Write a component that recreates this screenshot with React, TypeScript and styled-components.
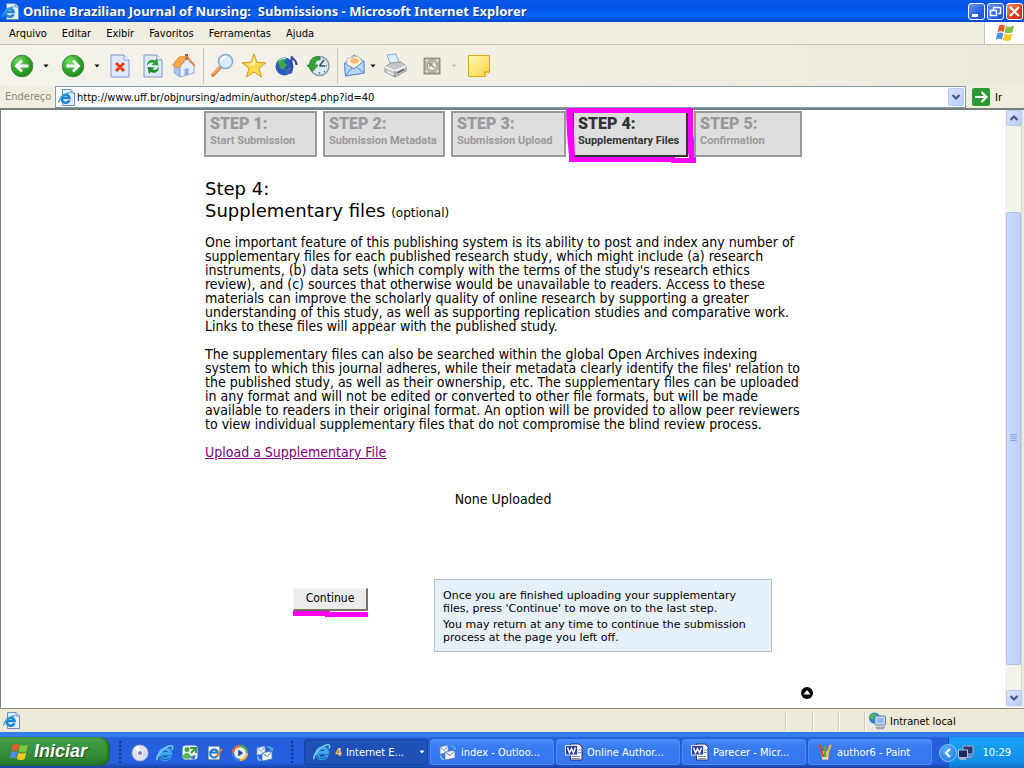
import React from "react";
import styled, { createGlobalStyle } from "styled-components";

const ui = '"DejaVu Sans Condensed", "DejaVu Sans", sans-serif';
const text = '"DejaVu Sans", sans-serif';

const Global = createGlobalStyle`
  * { box-sizing: border-box; }
  body { margin: 0; background: #fff; font-family: ${ui}; font-size: 11px; color: #000; }
  button, input { font: inherit; color: inherit; }
  h1, p { margin: 0; font-weight: normal; }
`;

const Window = styled.div`
  display: flex;
  flex-direction: column;
  min-height: 100vh;
`;

/* ---------- title bar ---------- */
const TitleBar = styled.header`
  display: flex;
  align-items: center;
  height: 22px;
  padding: 0 1px 0 2px;
  gap: 4px;
  background: linear-gradient(#0a5ae8 0, #0355e6 30%, #0562fa 75%, #0448cc 100%);
`;
const Title = styled.span`
  flex: 1;
  font: bold 13px "Noto Sans", sans-serif;
  color: #fff;
  text-shadow: 1px 1px 0 #0f3a9a;
  white-space: pre;
  overflow: hidden;
`;
const WindowButtons = styled.div`
  display: flex;
  gap: 2px;
`;
const WindowButton = styled.button<{ $close?: boolean }>`
  width: 17px;
  height: 17px;
  padding: 0;
  border: 1px solid #fff;
  border-radius: 3px;
  display: flex;
  align-items: center;
  justify-content: center;
  background: ${(p) =>
    p.$close ? "linear-gradient(135deg, #f09070, #d8401c 60%, #c03010)" : "linear-gradient(135deg, #6a9af8, #2a62e4 60%, #1c50d0)"};
`;

/* ---------- menu, tool and address bars ---------- */
const MenuBar = styled.nav`
  display: flex;
  align-items: stretch;
  height: 23px;
  padding-left: 9px;
  background: #efeddf;
  border-bottom: 1px solid #c8c5b4;
`;
const Menus = styled.div`
  flex: 1;
  display: flex;
  align-items: center;
  gap: 15px;
`;
const PlainButton = styled.button`
  border: 0;
  padding: 0;
  background: none;
`;
const Throbber = styled.div`
  width: 40px;
  display: flex;
  align-items: center;
  justify-content: center;
  background: #fff;
  border-left: 1px solid #c8c5b4;
`;
const ToolBar = styled.div`
  display: flex;
  align-items: center;
  height: 41px;
  padding-left: 6px;
  background: linear-gradient(90deg, #f4f3ec, #ece9d8);
`;
const Tool = styled.button<{ $w: number }>`
  width: ${(p) => p.$w}px;
  height: 32px;
  padding: 0;
  border: 0;
  background: none;
  display: flex;
  align-items: center;
  justify-content: center;
`;
const ToolRule = styled.span`
  width: 1px;
  height: 36px;
  margin: 0 2px 0 3px;
  background: #c8c5b4;
`;
const AddressBar = styled.form`
  display: flex;
  align-items: stretch;
  height: 22px;
  background: #efeddf;
`;
const AddressLabel = styled.label`
  width: 55px;
  padding-left: 5px;
  line-height: 22px;
  color: #8a8878;
`;
const AddressField = styled.div`
  flex: 1;
  display: flex;
  align-items: center;
  gap: 2px;
  padding: 0 1px 0 2px;
  background: #fff;
  border: 1px solid #7f9db9;
`;
const AddressInput = styled.input`
  flex: 1;
  min-width: 0;
  border: 0;
  padding: 0;
  outline: 0;
  background: none;
`;
const BlueButton = styled.button<{ $h: number }>`
  width: 16px;
  height: ${(p) => p.$h}px;
  flex: none;
  padding: 0;
  border: 1px solid #b4c8f6;
  border-radius: 2px;
  background: linear-gradient(135deg, #dae5fe, #b6ccfa);
  display: flex;
  align-items: center;
  justify-content: center;
`;
const GoButton = styled.button`
  width: 58px;
  padding: 0 0 0 6px;
  border: 0;
  background: none;
  display: flex;
  align-items: center;
  gap: 5px;
`;

/* ---------- page ---------- */
const Viewport = styled.div`
  flex: 1;
  display: flex;
  border: solid #75807a;
  border-width: 2px 0 0 1px;
  border-bottom: 1px solid #fff;
`;
const Page = styled.main`
  flex: 1;
  min-width: 0;
  padding: 1px 0 8px;
  font: 14px/14px ${ui};
`;
const Column = styled.div`
  width: 598px;
  max-width: 100%;
  margin: 0 auto;
`;
const Steps = styled.ol`
  display: flex;
  gap: 6px;
  margin: 0 0 21px;
  padding: 0;
  list-style: none;
`;
const Step = styled.li<{ $w: number; $active?: boolean }>`
  position: relative;
  width: ${(p) => p.$w}px;
  height: 46px;
  padding: 3px 0 0 4px;
  border: 2px solid ${(p) => (p.$active ? "#333" : "#999")};
  background: #dedede;
  color: ${(p) => (p.$active ? "#333" : "#999")};
  font-family: Roboto, sans-serif;
  font-weight: bold;
  white-space: nowrap;
`;
const StepNumber = styled.div`
  font-size: 16px;
  font-weight: 900;
  line-height: 16px;
`;
const StepName = styled.div`
  font-size: 11px;
  line-height: 18px;
`;
const Scribble = styled.svg`
  position: absolute;
  left: -9px;
  top: -7px;
`;
const Heading = styled.h1`
  font-family: ${text};
  font-size: 18px;
  line-height: 22px;
  margin-bottom: 11px;
  padding-left: 1px;
`;
const Small = styled.span`
  font-size: 12px;
`;
const Paragraph = styled.p`
  margin-bottom: 14px;
  padding-left: 1px;
  white-space: nowrap;
`;
const UploadLink = styled.a`
  color: #800080;
`;
const Empty = styled.p`
  margin: 33px 0 73px;
  text-align: center;
`;
const Actions = styled.div`
  display: flex;
  align-items: flex-start;
`;
const ActionCell = styled.div`
  width: 230px;
  padding: 9px 66px 0 0;
  display: flex;
  flex-direction: column;
  align-items: flex-end;
`;
const ContinueButton = styled.button`
  width: 75px;
  height: 23px;
  padding: 0 0 2px;
  border: 1px solid;
  border-color: #f4f4f0 #77735c #77735c #f4f4f0;
  border-right-width: 2px;
  border-bottom-width: 2px;
  background: #ececec;
  font: 12px ${ui};
`;
const Note = styled.aside`
  width: 338px;
  padding: 9px 8px 7px;
  border: 1px solid #b8c0c8;
  background: #e6f0fa;
  font: 11px/13px ${text};
  white-space: nowrap;

  p + p { margin-top: 3px; }
`;
const TopLink = styled.a`
  display: flex;
  justify-content: flex-end;
  width: 620px;
  max-width: 100%;
  margin: 35px auto 0;
`;

const ScrollBar = styled.div`
  width: 19px;
  flex: none;
  display: flex;
  flex-direction: column;
  padding: 0 0 1px 1px;
  background: linear-gradient(90deg, #f3f2ea 0 16px, #d8d6cc 16px 17px, #ece9d8 17px);
`;
const Track = styled.div<{ $grow: number }>`
  flex: ${(p) => p.$grow} 0 0;
`;
const Thumb = styled.div`
  flex: 453 0 0;
  width: 15px;
  border: 1px solid #a8bff0;
  border-radius: 2px;
  background: linear-gradient(90deg, #cbdafe, #bdd0fb);
  display: flex;
  align-items: center;
  justify-content: center;
`;

/* ---------- status bar ---------- */
const StatusBar = styled.footer`
  display: flex;
  align-items: stretch;
  height: 24px;
  padding: 3px 0 2px 3px;
  border-top: 1px solid #8c8a7c;
  background: #ece9d8;
`;
const StatusText = styled.div`
  flex: 1;
`;
const StatusPane = styled.div<{ $w: number }>`
  width: ${(p) => p.$w}px;
  display: flex;
  align-items: center;
  gap: 3px;
  padding-left: 3px;
  border-left: 1px solid #cbc8b6;
  box-shadow: inset 1px 0 0 #fff;
`;

/* ---------- task bar ---------- */
const TaskBar = styled.nav`
  display: flex;
  align-items: stretch;
  height: 36px;
  padding-top: 5px;
  background: linear-gradient(#2f7be8 0, #3583ee 4px, #255edc 6px, #2560e0 85%, #1941a5 100%);
  color: #fff;
`;
const StartButton = styled.button`
  width: 110px;
  height: 29px;
  padding: 0 0 0 9px;
  border: 0;
  border-radius: 0 10px 10px 0;
  background: linear-gradient(#58a858 0, #3f9a42 18%, #338b36 70%, #23702a 100%);
  box-shadow: inset -2px 0 3px #1f5f24;
  display: flex;
  align-items: center;
  gap: 5px;
  color: #fff;
  font: italic bold 18px "Liberation Sans", sans-serif;
  text-shadow: 1px 1px 1px #1c4a20;
`;
const Grip = styled.span<{ $m: string }>`
  width: 4px;
  height: 22px;
  margin: ${(p) => p.$m};
  background: radial-gradient(circle at 1px 1px, #123a9c 1px, transparent 2px) 0 0 / 4px 4px;
`;
const QuickLaunch = styled.div`
  display: flex;
  align-items: center;
  width: 150px;
`;
const QuickButton = styled.button`
  width: 25px;
  height: 25px;
  padding: 0;
  border: 0;
  background: none;
  display: flex;
  align-items: center;
  justify-content: center;
`;
const Tasks = styled.div`
  flex: 1;
  display: flex;
  gap: 2px;
  min-width: 0;
`;
const Task = styled.button<{ $pressed?: boolean }>`
  flex: 0 1 124px;
  min-width: 0;
  height: 26px;
  margin-top: 2px;
  padding: 0 2px 0 8px;
  border: 1px solid ${(p) => (p.$pressed ? "#1643a0" : "#4a8df6")};
  border-radius: 3px;
  background: ${(p) => (p.$pressed ? "#1e50b8" : "linear-gradient(#4a8cfa, #3a7cf2 25%, #3574ee)")};
  display: flex;
  align-items: center;
  gap: 4px;
  white-space: nowrap;
`;
const TaskName = styled.span`
  flex: 1;
  text-align: left;
`;
const Count = styled.b`
  color: #ffc060;
  margin-right: 4px;
`;
const Tray = styled.div`
  width: 76px;
  display: flex;
  align-items: center;
  justify-content: space-between;
  padding-right: 13px;
  background: linear-gradient(#1a9af2 0, #16a0f4 15%, #118fe8 80%, #0d6fc8 100%);
  border-left: 1px solid #0b5cb8;
`;
const TrayToggle = styled.button`
  position: relative;
  left: -10px;
  width: 18px;
  height: 18px;
  padding: 0;
  border: 1px solid #8ac4f8;
  border-radius: 9px;
  background: radial-gradient(circle at 40% 30%, #5cb0f8, #1470d8);
  display: flex;
  align-items: center;
  justify-content: center;
`;
const TrayIcon = styled.span`
  display: flex;
  margin-left: -18px;
`;

/* ---------- drawings ---------- */
const IEMark = ({ size = 16 }: { size?: number }) => (
  <svg width={size} height={size} viewBox="0 0 16 16" aria-hidden="true">
    <path d="M12.600 10.800A4.700 4.700 0 1 1 12.900 8.600H5" fill="none" stroke="#3fa7ea" strokeWidth="3" />
    <path d="M12 12.500A5.500 5.500 0 0 1 3.400 11" fill="none" stroke="#1668b8" strokeWidth="1.200" />
    <path d="M1.200 14.400C-.6 12 5 3.600 12.600 1.600C15.200 1 15.300 3 14 5" fill="none" stroke="#7cc8f6" strokeWidth="1.400" />
  </svg>
);
const IEPage = () => (
  <svg width="17" height="17" viewBox="0 0 17 17" aria-hidden="true">
    <path d="M4.500 .5H13L16.500 4V16.500H4.500Z" fill="#e4eefc" stroke="#6f8fc4" />
    <path d="M13 .5V4H16.500" fill="#cfdcf4" stroke="#6f8fc4" />
    <path d="M11.400 11.200A4 4 0 1 1 11.600 9H4.500" fill="none" stroke="#1c86d0" strokeWidth="2.600" />
    <path d="M1 13.500C0 11 5 5 11.500 3.800" fill="none" stroke="#3aa0e0" strokeWidth="1.400" />
  </svg>
);
const Flag = ({ size }: { size: number }) => (
  <svg width={size} height={size} viewBox="0 0 20 20" aria-hidden="true">
    <path d="M4 2.500C6 1.300 8 1.500 10 2.600L8.600 9C6.600 7.900 4.600 7.900 2.500 9Z" fill="#ea5a28" />
    <path d="M11 3.100C13.500 4.300 16 4.200 19 2.600L17.500 9.200C15 10.500 12 10.400 9.600 9.400Z" fill="#86c440" />
    <path d="M2.200 10.200C4.300 9.100 6.300 9.200 8.300 10.200L6.900 16.500C5 15.500 3 15.600.8 16.700Z" fill="#4a8ee8" />
    <path d="M9.300 10.700C12 11.800 14.600 11.700 17.200 10.400L15.700 17C13 18.300 10.500 18.200 7.900 17Z" fill="#f8c828" />
  </svg>
);
const GreenArrow = ({ back }: { back?: boolean }) => (
  <svg width="24" height="24" viewBox="0 0 24 24" aria-hidden="true">
    <defs>
      <radialGradient id="green" cx=".35" cy=".3" r=".8">
        <stop offset="0" stopColor="#7ee06a" />
        <stop offset=".5" stopColor="#34a82e" />
        <stop offset="1" stopColor="#1c8418" />
      </radialGradient>
    </defs>
    <circle cx="12" cy="12" r="10.800" fill="url(#green)" stroke="#3c9436" />
    <path
      d={back ? "M18.500 12H7M12 6.500L6.500 12L12 17.500" : "M5.500 12H17M12 6.500L17.500 12L12 17.500"}
      fill="none"
      stroke="#fff"
      strokeWidth="2.800"
    />
  </svg>
);
const Drop = ({ color = "#000" }: { color?: string }) => (
  <svg width="6" height="4" viewBox="0 0 6 4" aria-hidden="true">
    <path d="M.5 .5H5.500L3 3.500Z" fill={color} />
  </svg>
);
const Chevron = ({ up }: { up?: boolean }) => (
  <svg width="10" height="8" viewBox="0 0 10 8" aria-hidden="true">
    <path d={up ? "M1.500 6L5 2.500L8.500 6" : "M1.500 2L5 5.500L8.500 2"} fill="none" stroke="#44597e" strokeWidth="2.200" />
  </svg>
);
const Sheet = ({ children }: { children: React.ReactNode }) => (
  <svg width="22" height="24" viewBox="0 0 22 24" aria-hidden="true">
    <path d="M2 1H15L20 6V23H2Z" fill="#dde8fc" stroke="#7d95d0" />
    <path d="M15 1V6H20" fill="#fff" stroke="#7d95d0" />
    {children}
  </svg>
);
const StopIcon = () => (
  <Sheet>
    <path d="M7 9L15 17M15 9L7 17" stroke="#f03c1c" strokeWidth="3" />
  </Sheet>
);
const RefreshIcon = () => (
  <Sheet>
    <path d="M5 11.500C5 6.500 10 4.500 13 6.500L15 4.500L16.500 11.500L9.500 11L11.500 9C9.600 8 7 9 5 11.500Z" fill="#28a030" />
    <path d="M17 13C17 18 12 20 9 18L7 20L5.500 13L12.500 13.500L10.500 15.500C12.500 16.500 15 15.500 17 13Z" fill="#1f8a28" />
  </Sheet>
);
const HomeIcon = () => (
  <svg width="25" height="25" viewBox="0 0 25 25" aria-hidden="true">
    <path d="M14 1H17V7H14Z" fill="#b84a28" />
    <path d="M3.500 12L9 15V24L3 20Z" fill="#a8c4f4" stroke="#7d98cc" strokeWidth=".7" />
    <path d="M9 24V13L16 6L23 13V20L9 24Z" fill="#e4eefe" stroke="#8098cc" strokeWidth=".8" />
    <path d="M1.500 12L8 4L16 3L8.500 14.500L4 14Z" fill="#f8a848" stroke="#e08830" strokeWidth=".8" />
    <path d="M16 3.500L24 13" stroke="#e08030" strokeWidth="1.600" />
    <path d="M13.500 22.700V16L17.500 15V21.700Z" fill="#8cb0ec" />
  </svg>
);
const SearchIcon = () => (
  <svg width="25" height="25" viewBox="0 0 25 25" aria-hidden="true">
    <path d="M10.500 14L3 22" stroke="#d88848" strokeWidth="3.800" strokeLinecap="round" />
    <path d="M10 14L3 21" stroke="#f4b880" strokeWidth="1.200" />
    <circle cx="15.500" cy="8.500" r="7" fill="#d4ecfc" stroke="#88a8d8" strokeWidth="1.600" />
    <path d="M11 8C11.500 5.500 13.500 4 16 4" fill="none" stroke="#fff" strokeWidth="1.800" />
  </svg>
);
const StarIcon = () => (
  <svg width="26" height="26" viewBox="0 0 26 26" aria-hidden="true">
    <path d="M13 1L16 9.300L25 9.800L18 15.300L20.500 24L13 19L5.500 24L8 15.300L1 9.800L10 9.300Z" fill="#fcd850" stroke="#d09a20" />
    <path d="M13 4L14.500 10L13 13L6 11L11 10.500Z" fill="#fff2a8" />
  </svg>
);
const MediaIcon = () => (
  <svg width="25" height="24" viewBox="0 0 25 24" aria-hidden="true">
    <circle cx="10.500" cy="12.500" r="9" fill="#2a58c0" />
    <path d="M3 8C5 4 9 3 12 4L10 8L13 11L9 16L6 14L5 10Z" fill="#38a848" />
    <path d="M12 16L16 14L17 17L13 20.500Z" fill="#48b850" />
    <path d="M5 7C7 4.500 10 4 12 5" stroke="#a8e0f8" strokeWidth="1.200" fill="none" />
    <path d="M17.500 17V2.500C19 6 23 6 22.500 11" fill="none" stroke="#3a48a0" strokeWidth="2" />
    <ellipse cx="15.500" cy="17.500" rx="3" ry="2.400" fill="#4858b4" />
  </svg>
);
const HistoryIcon = () => (
  <svg width="25" height="24" viewBox="0 0 25 24" aria-hidden="true">
    <circle cx="13.500" cy="12" r="9.500" fill="#dcebf8" stroke="#8898a8" strokeWidth="1.500" />
    <path d="M13.500 12L18 6M13.500 12H19" stroke="#34506c" strokeWidth="1.500" />
    <path d="M13.500 4V6M21 12H19.500M13.500 20V18M19 18L18 17" stroke="#3888c8" strokeWidth="1.400" />
    <path d="M14 3C8 1.500 3.500 5 3.500 11H.8L6.500 17.500L12 11H9C9 7.500 11 5.500 14 6Z" fill="#38a038" stroke="#1f7a28" strokeWidth=".7" />
  </svg>
);
const MailIcon = () => (
  <svg width="23" height="25" viewBox="0 0 23 25" aria-hidden="true">
    <path d="M1.500 10L11 2L21 8V20L2.500 23Z" fill="#d8e8fc" stroke="#7894d0" />
    <path d="M4 5.500L15 3L19 8L18 13L11 15L4 12Z" fill="#fff4dc" stroke="#b8a8a0" strokeWidth=".7" />
    <path d="M7 8C8 4 15 4 16 8C15 11 9 12 7 8Z" fill="#f8b870" />
    <path d="M1.500 10L11 16L21 8V20L2.500 23Z" fill="#b4d8f8" stroke="#6888cc" />
    <path d="M2.500 23L9 14.800M21 20L13.500 14" stroke="#6888cc" />
  </svg>
);
const PrintIcon = () => (
  <svg width="25" height="25" viewBox="0 0 25 25" aria-hidden="true">
    <path d="M4 2L13 1L17 11L8 13Z" fill="#dcecff" stroke="#7c98cc" strokeWidth=".8" />
    <path d="M2 14L8 10L18 9L23 13V18L12 24L2 19Z" fill="#c4c8cc" stroke="#84888c" strokeWidth=".8" />
    <path d="M2 14L12 18L23 13" fill="none" stroke="#f4f4f4" strokeWidth="1.600" />
    <path d="M12 18V24" stroke="#84888c" />
    <path d="M4 18L10 20.500V22L4 19.500Z" fill="#f4f8fc" />
    <path d="M14 20L21 16.500" stroke="#5c6064" strokeWidth="1.400" />
  </svg>
);
const EditIcon = () => (
  <svg width="18" height="18" viewBox="0 0 18 18" aria-hidden="true">
    <rect x="1.500" y="1.500" width="15" height="15" fill="#bcb9aa" stroke="#98968a" strokeWidth="2" />
    <circle cx="9" cy="9" r="4.500" fill="#f0efe8" stroke="#98968a" />
    <path d="M6 6.500H10M7 6V10M7 6.500L11.500 11" fill="none" stroke="#98968a" strokeWidth="1.400" />
    <path d="M3 5V3H5M13 3H15V5M15 13V15H13M5 15H3V13" fill="none" stroke="#f0efe8" />
  </svg>
);
const NoteIcon = () => (
  <svg width="24" height="24" viewBox="0 0 24 24" aria-hidden="true">
    <defs>
      <linearGradient id="paper" x1="0" y1="0" x2="1" y2="1">
        <stop offset="0" stopColor="#fffab8" />
        <stop offset="1" stopColor="#fad038" />
      </linearGradient>
    </defs>
    <path d="M1.500 1.500H22.500V18L18 22.500H1.500Z" fill="url(#paper)" stroke="#dca820" />
    <path d="M22.500 18H18V22.500" fill="#fff0a0" stroke="#c89018" />
  </svg>
);
const GlobeComputer = () => (
  <svg width="19" height="18" viewBox="0 0 19 18" aria-hidden="true">
    <circle cx="6.500" cy="6" r="5.500" fill="#2c7cd0" />
    <path d="M2 4C4 1 7 1 9 2L7 6L4 8L2 6Z" fill="#48b860" />
    <rect x="7" y="4" width="10.500" height="9" rx="1" fill="#c8dcf4" stroke="#6880b0" />
    <rect x="9" y="6" width="6.500" height="5" fill="#8cb8ec" />
    <path d="M8 15H17L15 17H9Z" fill="#b4bccc" stroke="#7884a0" strokeWidth=".6" />
  </svg>
);
const WordIcon = () => (
  <svg width="18" height="18" viewBox="0 0 18 18" aria-hidden="true">
    <path d="M5.500 1H14L17 4V17H5.500Z" fill="#fff" stroke="#28345c" />
    <path d="M13 7H16M13 9.500H16M7 13.500H15M7 15.500H15" stroke="#8090b8" />
    <rect x=".5" y="2.500" width="12" height="9.500" fill="#2c3ca0" stroke="#e0e4f8" />
    <path d="M2.500 4.500L4.500 10L6.500 5.500L8.500 10L10.500 4.500" fill="none" stroke="#fff" strokeWidth="1.400" />
  </svg>
);
const OutlookIcon = () => (
  <svg width="18" height="18" viewBox="0 0 18 18" aria-hidden="true">
    <path d="M1 4L9 2V10L1 11Z" fill="#f8fbff" stroke="#6c90c8" strokeWidth=".8" />
    <path d="M1 4L5.500 7.500L9 2" fill="none" stroke="#6c90c8" />
    <path d="M6 9L16 7V15L6 17Z" fill="#f8fbff" stroke="#5078b8" strokeWidth=".8" />
    <path d="M6 9L11.500 12.500L16 7" fill="none" stroke="#5078b8" />
    <path d="M10 4C12 1 15 2 16 4L17.500 3L17 7.500L13 6L14.500 5C13.500 3.800 12 3.800 10 4Z" fill="#58b4f0" stroke="#1c60b0" strokeWidth=".5" />
    <path d="M5 16C2.500 16.500 1.500 14.500 2 12.500" fill="none" stroke="#70c0f4" strokeWidth="1.800" />
  </svg>
);
const PaintIcon = () => (
  <svg width="16" height="18" viewBox="0 0 15 18" aria-hidden="true">
    <path d="M3 8H12L11 17H4.500Z" fill="#d8dcdc" stroke="#70787c" strokeWidth=".7" />
    <path d="M2 1.500L6 14" stroke="#d84828" strokeWidth="2.200" />
    <path d="M13 2L8.500 14" stroke="#f0b830" strokeWidth="2.200" />
    <path d="M7.500 3V14" stroke="#58a848" strokeWidth="2" />
  </svg>
);
const DiscIcon = () => (
  <svg width="18" height="18" viewBox="0 0 18 18" aria-hidden="true">
    <circle cx="9" cy="9" r="8" fill="#e4e0f0" stroke="#b0a8c8" />
    <path d="M9 9L3 4A8 8 0 0 1 8 1.500Z" fill="#fff" />
    <path d="M9 9L15 14A8 8 0 0 0 16.500 9Z" fill="#c4d8f4" />
    <circle cx="9" cy="9" r="2.500" fill="#847ca8" stroke="#fff" />
  </svg>
);
const MessengerIcon = () => (
  <svg width="18" height="18" viewBox="0 0 18 18" aria-hidden="true">
    <rect x="1.500" y="1.500" width="15" height="14" rx="3" fill="#e8f4e4" />
    <circle cx="6" cy="5.500" r="2.500" fill="#48a848" />
    <path d="M1.500 14C2 9 7 7 10 12L8 15Z" fill="#58b850" />
    <path d="M9 4H15V9M15 4L10 9" stroke="#3c9840" strokeWidth="2" fill="none" />
    <path d="M8 13L15 11L13 16Z" fill="#4470c0" />
  </svg>
);
const FrontPageIcon = () => (
  <svg width="18" height="18" viewBox="0 0 18 18" aria-hidden="true">
    <rect x="2" y="2" width="12" height="14" fill="#e8f0fc" stroke="#2858a8" />
    <path d="M12 10.500A4 4 0 1 1 12 8.500H5" fill="none" stroke="#1c78cc" strokeWidth="2" />
    <path d="M10 13L16 5" stroke="#e88030" strokeWidth="2" />
  </svg>
);
const PlayerIcon = () => (
  <svg width="18" height="18" viewBox="0 0 18 18" aria-hidden="true">
    <circle cx="9" cy="9" r="6.500" fill="#fff" />
    <path d="M9 2A7 7 0 0 1 16 9" fill="none" stroke="#58a850" strokeWidth="2.500" />
    <path d="M16 9A7 7 0 0 1 9 16" fill="none" stroke="#f0b838" strokeWidth="2.500" />
    <path d="M9 16A7 7 0 0 1 2 9" fill="none" stroke="#4880d8" strokeWidth="2.500" />
    <path d="M2 9A7 7 0 0 1 9 2" fill="none" stroke="#e06838" strokeWidth="2.500" />
    <circle cx="9" cy="9" r="4.500" fill="#dce8fc" />
    <path d="M7.300 5.800L12 9L7.300 12.200Z" fill="#203890" />
  </svg>
);
const NetworkIcon = () => (
  <svg width="18" height="18" viewBox="0 0 18 18" aria-hidden="true">
    <rect x="6" y="2" width="10" height="8" fill="#28386c" stroke="#a8b4d0" />
    <path d="M9 12H16L14 14H10Z" fill="#8c98b4" />
    <rect x="1.500" y="6" width="9" height="7.500" fill="#1c2c60" stroke="#b4c0dc" />
    <path d="M2 16H10L8.500 14H3.500Z" fill="#a4b0cc" />
  </svg>
);

const menus = ["Arquivo", "Editar", "Exibir", "Favoritos", "Ferramentas", "Ajuda"];

const steps = [
  { name: "Start Submission", w: 113 },
  { name: "Submission Metadata", w: 122 },
  { name: "Submission Upload", w: 115 },
  { name: "Supplementary Files", w: 116, active: true },
  { name: "Confirmation", w: 108 },
];

const intro = [
  [
    "One important feature of this publishing system is its ability to post and index any number of",
    "supplementary files for each published research study, which might include (a) research",
    "instruments, (b) data sets (which comply with the terms of the study's research ethics",
    "review), and (c) sources that otherwise would be unavailable to readers. Access to these",
    "materials can improve the scholarly quality of online research by supporting a greater",
    "understanding of this study, as well as supporting replication studies and comparative work.",
    "Links to these files will appear with the published study.",
  ],
  [
    "The supplementary files can also be searched within the global Open Archives indexing",
    "system to which this journal adheres, while their metadata clearly identify the files' relation to",
    "the published study, as well as their ownership, etc. The supplementary files can be uploaded",
    "in any format and will not be edited or converted to other file formats, but will be made",
    "available to readers in their original format. An option will be provided to allow peer reviewers",
    "to view individual supplementary files that do not compromise the blind review process.",
  ],
];

const Lines = ({ lines }: { lines: string[] }) => (
  <>
    {lines.map((line, i) => (
      <React.Fragment key={line}>
        {i > 0 && <br />}
        {line}
      </React.Fragment>
    ))}
  </>
);

const quick = [
  { label: "Disc", icon: <DiscIcon /> },
  { label: "Internet Explorer", icon: <IEMark size={18} /> },
  { label: "Messenger", icon: <MessengerIcon /> },
  { label: "Web editor", icon: <FrontPageIcon /> },
  { label: "Media Player", icon: <PlayerIcon /> },
  { label: "Outlook Express", icon: <OutlookIcon /> },
];

const tasks = [
  { name: "index - Outloo...", icon: <OutlookIcon /> },
  { name: "Online Author...", icon: <WordIcon /> },
  { name: "Parecer - Micr...", icon: <WordIcon /> },
  { name: "author6 - Paint", icon: <PaintIcon /> },
];

export default function App() {
  return (
    <Window>
      <Global />
      <TitleBar>
        <IEPage />
        <Title>{"Online Brazilian Journal of Nursing:  Submissions - Microsoft Internet Explorer"}</Title>
        <WindowButtons>
          <WindowButton aria-label="Minimizar">
            <svg width="13" height="13"><path d="M2 10.500H8" stroke="#fff" strokeWidth="3" /></svg>
          </WindowButton>
          <WindowButton aria-label="Restaurar">
            <svg width="13" height="13">
              <path d="M4.500 5V2.500H11.500V8.500H9" fill="none" stroke="#fff" strokeWidth="1.500" />
              <rect x="1.500" y="5.500" width="6" height="5" fill="none" stroke="#fff" strokeWidth="1.500" />
            </svg>
          </WindowButton>
          <WindowButton $close aria-label="Fechar">
            <svg width="13" height="13"><path d="M2 2L11 11M11 2L2 11" stroke="#fff" strokeWidth="2" /></svg>
          </WindowButton>
        </WindowButtons>
      </TitleBar>

      <MenuBar>
        <Menus>
          {menus.map((m) => <PlainButton key={m}>{m}</PlainButton>)}
        </Menus>
        <Throbber><Flag size={20} /></Throbber>
      </MenuBar>

      <ToolBar>
        <Tool $w={31} aria-label="Voltar"><GreenArrow back /></Tool>
        <Tool $w={17} aria-label="Lista de voltar"><Drop /></Tool>
        <Tool $w={37} aria-label="Avançar"><GreenArrow /></Tool>
        <Tool $w={11} aria-label="Lista de avançar"><Drop /></Tool>
        <Tool $w={36} aria-label="Parar"><StopIcon /></Tool>
        <Tool $w={29} aria-label="Atualizar"><RefreshIcon /></Tool>
        <Tool $w={33} aria-label="Página inicial"><HomeIcon /></Tool>
        <ToolRule />
        <Tool $w={32} aria-label="Pesquisar"><SearchIcon /></Tool>
        <Tool $w={32} aria-label="Favoritos"><StarIcon /></Tool>
        <Tool $w={32} aria-label="Mídia"><MediaIcon /></Tool>
        <Tool $w={32} aria-label="Histórico"><HistoryIcon /></Tool>
        <ToolRule />
        <Tool $w={29} aria-label="Correio"><MailIcon /></Tool>
        <Tool $w={8} aria-label="Lista de correio"><Drop /></Tool>
        <Tool $w={36} aria-label="Imprimir"><PrintIcon /></Tool>
        <Tool $w={37} aria-label="Editar"><EditIcon /></Tool>
        <Tool $w={8} aria-label="Lista de editar"><Drop color="#c0bdae" /></Tool>
        <Tool $w={41} aria-label="Discutir"><NoteIcon /></Tool>
      </ToolBar>

      <AddressBar onSubmit={(e) => e.preventDefault()}>
        <AddressLabel htmlFor="address">Endereço</AddressLabel>
        <AddressField>
          <IEPage />
          <AddressInput id="address" defaultValue="http://www.uff.br/objnursing/admin/author/step4.php?id=40" />
          <BlueButton type="button" $h={18} aria-label="Endereços"><Chevron /></BlueButton>
        </AddressField>
        <GoButton type="submit">
          <svg width="18" height="18" viewBox="0 0 18 18" aria-hidden="true">
            <rect width="18" height="18" rx="2" fill="#2c9a34" />
            <path d="M3 9H14M9.500 4L14.500 9L9.500 14" fill="none" stroke="#fff" strokeWidth="2.200" />
          </svg>
          Ir
        </GoButton>
      </AddressBar>

      <Viewport>
        <Page id="top">
          <Column>
            <Steps>
              {steps.map((s, i) => (
                <Step key={s.name} $w={s.w} $active={s.active}>
                  <StepNumber>STEP {i + 1}:</StepNumber>
                  <StepName>{s.name}</StepName>
                  {s.active && (
                    <Scribble width="132" height="60" viewBox="0 0 132 60" aria-hidden="true">
                      <path
                        d="M1 4L4 2H128V28L131 45V57H106V56H4V50L2 28ZM8 7L10 50L7 51H110V52H124L123 46V7Z"
                        fill="#f0f"
                        fillRule="evenodd"
                      />
                    </Scribble>
                  )}
                </Step>
              ))}
            </Steps>
            <Heading>
              Step 4:<br />
              Supplementary files <Small>(optional)</Small>
            </Heading>
            {intro.map((lines) => (
              <Paragraph key={lines[0]}><Lines lines={lines} /></Paragraph>
            ))}
            <Paragraph><UploadLink href="#upload">Upload a Supplementary File</UploadLink></Paragraph>
            <Empty>None Uploaded</Empty>
            <Actions>
              <ActionCell>
                <ContinueButton>Continue</ContinueButton>
                <svg width="75" height="6" aria-hidden="true">
                  <path d="M0 0H36L38 1H75V6H32V5H0Z" fill="#f0f" />
                </svg>
              </ActionCell>
              <Note>
                <p>
                  <Lines lines={["Once you are finished uploading your supplementary", "files, press 'Continue' to move on to the last step."]} />
                </p>
                <p>
                  <Lines lines={["You may return at any time to continue the submission", "process at the page you left off."]} />
                </p>
              </Note>
            </Actions>
          </Column>
          <TopLink href="#top" aria-label="Topo">
            <svg width="12" height="12" viewBox="0 0 12 12" aria-hidden="true">
              <circle cx="6" cy="6" r="6" fill="#000" />
              <path d="M6 3L9.500 7.500H2.500Z" fill="#fff" />
            </svg>
          </TopLink>
        </Page>
        <ScrollBar>
          <BlueButton $h={16} aria-label="Rolar para cima"><Chevron up /></BlueButton>
          <Track $grow={86} />
          <Thumb>
            <svg width="8" height="8" aria-hidden="true">
              <path d="M0 .5H7M0 2.500H7M0 4.500H7M0 6.500H7" stroke="#8caaf0" />
            </svg>
          </Thumb>
          <Track $grow={25} />
          <BlueButton $h={16} aria-label="Rolar para baixo"><Chevron /></BlueButton>
        </ScrollBar>
      </Viewport>

      <StatusBar>
        <StatusText><IEPage /></StatusText>
        <StatusPane $w={27} />
        <StatusPane $w={26} />
        <StatusPane $w={26} />
        <StatusPane $w={160}><GlobeComputer />Intranet local</StatusPane>
      </StatusBar>

      <TaskBar>
        <StartButton><Flag size={20} />Iniciar</StartButton>
        <Grip $m="4px 4px 0 9px" />
        <QuickLaunch>
          {quick.map((q) => <QuickButton key={q.label} aria-label={q.label}>{q.icon}</QuickButton>)}
        </QuickLaunch>
        <Grip $m="4px 9px 0 14px" />
        <Tasks>
          <Task $pressed>
            <IEMark size={18} />
            <TaskName><Count>4</Count>Internet E...</TaskName>
            <Drop color="#fff" />
          </Task>
          {tasks.map((t) => (
            <Task key={t.name}>{t.icon}<TaskName>{t.name}</TaskName></Task>
          ))}
        </Tasks>
        <Tray>
          <TrayToggle aria-label="Mostrar ícones ocultos">
            <svg width="8" height="10" aria-hidden="true"><path d="M6 1L2 5L6 9" fill="none" stroke="#fff" strokeWidth="2" /></svg>
          </TrayToggle>
          <TrayIcon><NetworkIcon /></TrayIcon>
          <time>10:29</time>
        </Tray>
      </TaskBar>
    </Window>
  );
}
